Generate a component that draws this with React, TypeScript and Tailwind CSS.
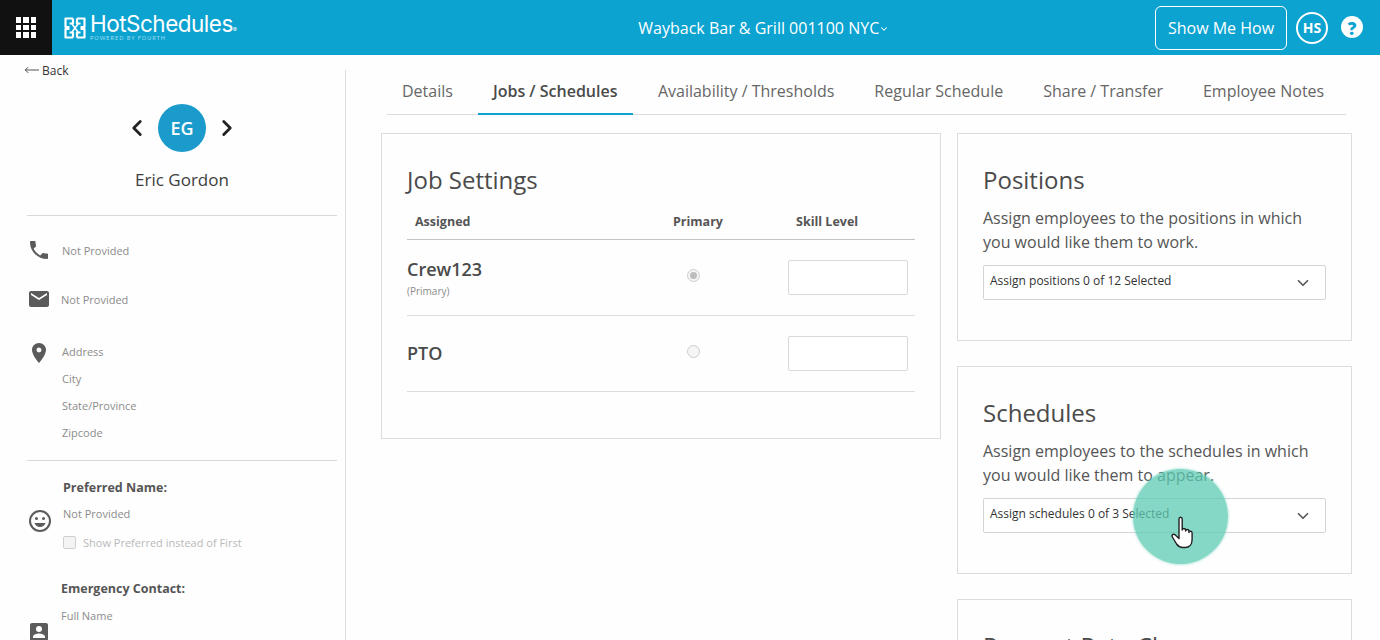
import { ChevronDown, ChevronLeft, ChevronRight, MoveLeft } from "lucide-react";

const font = "font-['Open_Sans',sans-serif]";

const tabs = ["Details", "Jobs / Schedules", "Availability / Thresholds", "Regular Schedule", "Share / Transfer", "Employee Notes"];

function Logo() {
	return (
		<div className="ml-3 flex items-center">
			<svg width="22" height="22" viewBox="0 0 22 22" fill="none" stroke="white" strokeWidth="2.2" strokeLinejoin="round">
				<path d="M9 1.500H1.500v8.500h4M9 1.500v5H5.500M13 1.500h7.500v8.500h-4M13 1.500v5h3.500M9 20.500H1.500V12h4M9 20.500v-5H5.500M13 20.500h7.500V12h-4M13 20.500v-5h3.500" />
				<path d="M8 7l6 8M14 7l-6 8" strokeWidth="1.600" />
			</svg>
			<div className="ml-[4px] flex flex-col">
				<span className="font-['Inter',sans-serif] text-[22.500px] leading-[20px] tracking-[-0.5px] text-white">HotSchedules<span className="text-[6px]">®</span></span>
				<span className="mt-[-5px] font-['Lato',sans-serif] text-[5.500px] leading-[6px] tracking-[1px] text-[#9fdcef]">POWERED BY FOURTH</span>
			</div>
		</div>
	);
}

function Header() {
	return (
		<header className="flex h-[55px] items-center bg-[#0ca3d1] text-white">
			<div className="grid h-full w-[52px] shrink-0 place-items-center bg-[#111111]">
				<div className="grid grid-cols-3 gap-[2px]">
					{Array.from({ length: 9 }).map((_, i) => (
						<span key={i} className="size-[5.500px] bg-white" />
					))}
				</div>
			</div>
			<Logo />
			<div className="ml-[402px] flex items-center text-[16px]">
				Wayback Bar &amp; Grill 001100 NYC
				<ChevronDown className="mt-[2px] size-[10px]" strokeWidth={2.5} />
			</div>
			<button className="ml-auto h-[44px] w-[132px] rounded-[6px] border border-white text-[16px] text-white">Show Me How</button>
			<div className="ml-[9px] grid size-[32px] place-items-center rounded-full border-2 border-white text-[14px] font-bold">HS</div>
			<div className="mx-[17px] mb-[2px] ml-[13px] grid size-[22px] place-items-center rounded-full bg-white text-[17px] font-extrabold text-[#0ca3d1]">?</div>
		</header>
	);
}

function PhoneIcon() {
	return (
		<svg width="24" height="24" viewBox="0 0 24 24" fill="#5b5b5b">
			<path d="M6.62 10.79c1.44 2.83 3.76 5.14 6.59 6.59l2.2-2.2c.27-.27.67-.36 1.02-.24 1.12.37 2.33.57 3.57.57.55 0 1 .45 1 1V20c0 .55-.45 1-1 1-9.39 0-17-7.61-17-17 0-.55.45-1 1-1h3.5c.55 0 1 .45 1 1 0 1.25.2 2.45.57 3.57.11.35.03.74-.25 1.02l-2.2 2.2z" />
		</svg>
	);
}

function MailIcon() {
	return (
		<svg width="24" height="24" viewBox="0 0 24 24" fill="#5b5b5b">
			<path d="M20 4H4c-1.100 0-2 .9-2 2v12c0 1.100.9 2 2 2h16c1.100 0 2-.9 2-2V6c0-1.100-.9-2-2-2zm0 4l-8 5-8-5V6l8 5 8-5v2z" />
		</svg>
	);
}

function PinIcon() {
	return (
		<svg width="24" height="24" viewBox="0 0 24 24" fill="#5b5b5b">
			<path d="M12 2C8.130 2 5 5.130 5 9c0 5.250 7 13 7 13s7-7.750 7-13c0-3.870-3.130-7-7-7zm0 9.500a2.500 2.500 0 0 1 0-5 2.500 2.500 0 0 1 0 5z" />
		</svg>
	);
}

function SmileIcon() {
	return (
		<svg width="24" height="24" viewBox="0 0 24 24" fill="none">
			<circle cx="12" cy="12" r="10" stroke="#5b5b5b" strokeWidth="2" />
			<circle cx="8.500" cy="9.500" r="1.500" fill="#5b5b5b" />
			<circle cx="15.500" cy="9.500" r="1.500" fill="#5b5b5b" />
			<path d="M6.500 14h11c-.8 2.400-3 4-5.500 4s-4.700-1.600-5.500-4z" fill="#5b5b5b" />
		</svg>
	);
}

function ContactIcon() {
	return (
		<svg width="24" height="24" viewBox="0 0 24 24" fill="#5b5b5b">
			<path d="M19 3H5c-1.100 0-2 .9-2 2v14c0 1.100.9 2 2 2h14c1.100 0 2-.9 2-2V5c0-1.100-.9-2-2-2zm-7 3a3 3 0 1 1 0 6 3 3 0 0 1 0-6zm6 12H6v-1.500c0-2 4-3.100 6-3.100s6 1.100 6 3.100V18z" />
		</svg>
	);
}

function Sidebar() {
	const small = "text-[11px] leading-[15px] text-[#8c8c8c]";
	return (
		<aside className="w-[346px] shrink-0">
			<div className="flex h-[23px] items-end gap-[2px] pl-[24px] text-[12px] leading-[15px] text-[#333]">
				<MoveLeft className="size-[16px] text-[#555]" strokeWidth={1.5} />
				Back
			</div>
			<div className="mt-[-8px] h-[570px] border-r border-[#dddddd] pr-[8px] pl-[27px]">
				<div className="flex h-[146px] flex-col items-center border-b border-[#d9d9d9]">
					<div className="mt-[34px] flex items-center">
						<ChevronLeft className="mr-[8px] size-[26px] text-[#222]" strokeWidth={2.6} />
						<div className="grid size-[48px] place-items-center rounded-full bg-[#1a9bcc] text-[18px] font-semibold text-white">EG</div>
						<ChevronRight className="ml-[8px] size-[26px] text-[#222]" strokeWidth={2.6} />
					</div>
					<div className="mt-[17px] text-[17px] leading-[22px] text-[#3d3d3d]">Eric Gordon</div>
				</div>
				<div className="mt-[22px] flex items-center gap-[11px]">
					<PhoneIcon />
					<span className={small}>Not Provided</span>
				</div>
				<div className="mt-[25px] flex items-center gap-[10px]">
					<MailIcon />
					<span className={small}>Not Provided</span>
				</div>
				<div className="mt-[30px] flex items-start gap-[11px]">
					<PinIcon />
					<div className={`mt-[3px] flex flex-col gap-[12px] ${small}`}>
						<span>Address</span>
						<span>City</span>
						<span>State/Province</span>
						<span>Zipcode</span>
					</div>
				</div>
				<div className="mt-[20px] border-t border-[#d9d9d9]" />
				<div className="mt-[19px] flex items-start gap-[11px]">
					<div className="mt-[29px] ml-[1px]">
						<SmileIcon />
					</div>
					<div className="flex flex-col">
						<span className="text-[12.500px] leading-[15px] font-bold text-[#555]">Preferred Name:</span>
						<span className={`mt-[11px] ${small}`}>Not Provided</span>
						<span className="mt-[14px] flex items-center gap-[7px] text-[11px] leading-[15px] text-[#b9b9b9]">
							<span className="size-[13px] rounded-[2px] border border-[#cfcfcf] bg-[#f4f4f4]" />
							Show Preferred instead of First
						</span>
					</div>
				</div>
				<div className="mt-[31px] flex items-start gap-[10px]">
					<div className="mt-[39px]">
						<ContactIcon />
					</div>
					<div className="flex flex-col">
						<span className="text-[12.500px] leading-[15px] font-bold text-[#555]">Emergency Contact:</span>
						<span className={`mt-[12px] ${small}`}>Full Name</span>
						<span className={`mt-[13px] ${small}`}>Relationship</span>
					</div>
				</div>
			</div>
		</aside>
	);
}

function Tabs() {
	return (
		<nav className="ml-[41px] flex h-[45px] w-[959px] gap-[10px] border-b border-[#dddddd]">
			{tabs.map((t) => (
				<div
					key={t}
					className={
						t === "Jobs / Schedules"
							? "flex h-[45px] w-[155px] items-center border-b-2 border-[#0ca3d1] px-[15px] pb-[2px] text-[16px] font-semibold whitespace-nowrap text-[#4a4a4a]"
							: "flex h-[44px] items-center px-[15px] pb-[2px] text-[16px] text-[#666666]"
					}
				>
					{t}
				</div>
			))}
		</nav>
	);
}

function JobRow({ name, primary }: { name: string; primary?: boolean }) {
	return (
		<div className="flex h-[76px] items-center border-b border-[#dddddd]">
			<div className="w-[280px]">
				<div className="mt-[-1px] text-[18px] leading-[24px] font-semibold text-[#4a4a4a]">{name}</div>
				{primary && <div className="mt-[4px] text-[10px] leading-[12px] text-[#8c8c8c]">(Primary)</div>}
			</div>
			<span className="mt-[-4px] grid size-[13px] place-items-center rounded-full border border-[#cccccc] bg-[#f5f5f5]">
				{primary && <span className="size-[7px] rounded-full bg-[#bdbdbd]" />}
			</span>
			<div className="ml-[88px] h-[35px] w-[120px] rounded-[2px] border border-[#d9d9d9] bg-white" />
		</div>
	);
}

function JobSettings() {
	return (
		<section className="h-[306px] w-[560px] border border-[#dddddd] px-[25px] pt-[28px]">
			<h2 className="text-[24px] leading-[36px] text-[#4a4a4a]">Job Settings</h2>
			<div className="mt-[18px] flex h-[24px] items-center border-b border-[#c4c4c4] pb-[10px] text-[12.500px] font-bold text-[#555]">
				<span className="w-[266px] pl-[8px]">Assigned</span>
				<span className="w-[123px]">Primary</span>
				<span>Skill Level</span>
			</div>
			<JobRow name="Crew123" primary />
			<JobRow name="PTO" />
		</section>
	);
}

function AssignCard({ title, text, select }: { title: string; text?: string; select?: string }) {
	return (
		<section className="h-[208px] w-[395px] shrink-0 border border-[#dddddd] px-[25px] pt-[28px]">
			<h2 className="text-[24px] leading-[36px] text-[#4a4a4a]">{title}</h2>
			{text && <p className="mt-[8px] w-[340px] text-[16px] leading-[24px] text-[#555]">{text}</p>}
			{select && (
				<div className="mt-[11px] flex h-[35px] items-center justify-between rounded-[2px] border border-[#d4d4d4] bg-white pr-[13px] pl-[6px] text-[12px] text-[#333]">
					<span className="mb-[3px]">{select}</span>
					<ChevronDown className="size-[18px] text-[#555]" strokeWidth={2.2} />
				</div>
			)}
		</section>
	);
}

function Tap() {
	return (
		<div className="absolute top-[469px] left-[1133px] grid size-[95px] place-items-center rounded-full bg-[#5dcbb3]/75 shadow-[0_0_3px_#85d8c6]">
			<svg className="mt-[32px] ml-[6px]" width="26" height="34" viewBox="0 0 26 34" fill="white" stroke="#222" strokeWidth="1.400" strokeLinejoin="round">
				<path d="M8 3c0-2.400 3.200-2.400 3.200 0v11c.2-2 3.400-2 3.400 0v1c.2-2 3.300-2 3.300 0v1.500c.3-1.800 3.200-1.600 3.200.4v6.600c0 4.500-2.500 8-7 8h-2.500c-3 0-4.500-1.300-6-3.500L1.400 21c-1.200-2 1-3.600 2.600-2.200L8 22.500V3z" />
			</svg>
		</div>
	);
}

export default function App() {
	return (
		<div className={`relative h-[640px] w-[1380px] overflow-hidden bg-[#fefefe] ${font}`}>
			<Header />
			<div className="flex">
				<Sidebar />
				<main className="mt-[15px] flex-1">
					<Tabs />
					<div className="mt-[18px] ml-[35px] flex items-start gap-[16px]">
						<JobSettings />
						<div className="flex flex-col gap-[25px]">
							<AssignCard title="Positions" text="Assign employees to the positions in which you would like them to work." select="Assign positions 0 of 12 Selected" />
							<AssignCard title="Schedules" text="Assign employees to the schedules in which you would like them to appear." select="Assign schedules 0 of 3 Selected" />
							<AssignCard title="Request Rate Change" />
						</div>
					</div>
				</main>
			</div>
			<Tap />
		</div>
	);
}
